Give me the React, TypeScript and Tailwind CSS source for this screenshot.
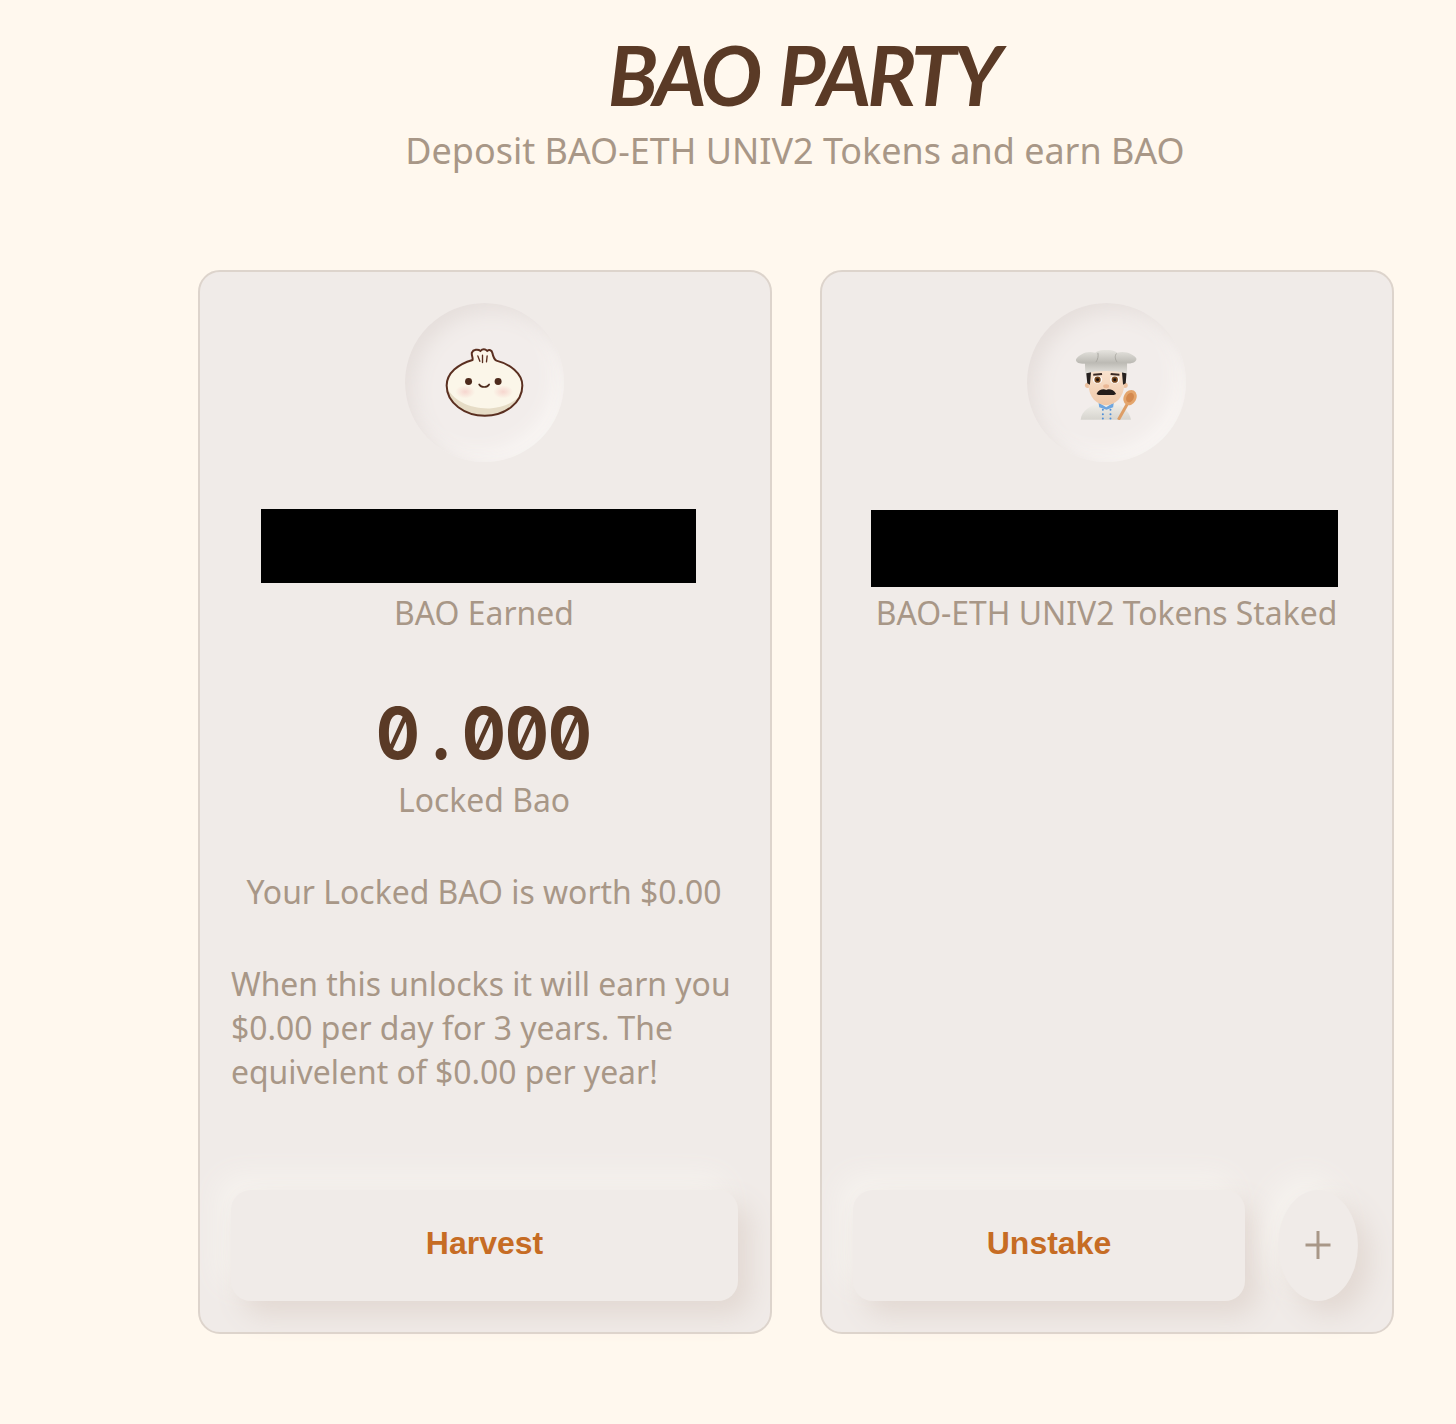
import React from "react";

const Bun = () => (
  <svg viewBox="165 172 238 212" className="w-[79px] h-[71px]">
    <defs>
      <radialGradient id="cheek">
        <stop offset="0%" stopColor="#f5c9c4" stopOpacity="0.7" />
        <stop offset="100%" stopColor="#f5c9c4" stopOpacity="0" />
      </radialGradient>
      <clipPath id="bunBody">
        <path d="M248 210C205 222 170 250 170 287C170 340 225 378 285 378C345 378 398 340 398 287C398 250 360 222 320 212C312 208 310 200 308 190C306 180 298 178 292 183C286 176 278 176 272 183C265 177 250 178 246 188C244 195 250 204 248 210Z" />
      </clipPath>
    </defs>
    <path d="M248 210C205 222 170 250 170 287C170 340 225 378 285 378C345 378 398 340 398 287C398 250 360 222 320 212C312 208 310 200 308 190C306 180 298 178 292 183C286 176 278 176 272 183C265 177 250 178 246 188C244 195 250 204 248 210Z" fill="#fbf6e9" />
    <g clipPath="url(#bunBody)">
      <path d="M170 290C185 330 240 358 300 356C340 354 375 340 398 310L398 385L170 385Z" fill="#e6dcc6" />
      <ellipse cx="226" cy="306" rx="30" ry="20" fill="url(#cheek)" />
      <ellipse cx="340" cy="306" rx="30" ry="20" fill="url(#cheek)" />
    </g>
    <path d="M248 210C205 222 170 250 170 287C170 340 225 378 285 378C345 378 398 340 398 287C398 250 360 222 320 212C312 208 310 200 308 190C306 180 298 178 292 183C286 176 278 176 272 183C265 177 250 178 246 188C244 195 250 204 248 210Z" fill="none" stroke="#5a2f20" strokeWidth="6" />
    <path d="M264 198L270 214M278 196L278 218M292 198L290 216" stroke="#5a2f20" strokeWidth="4" strokeLinecap="round" fill="none" />
    <circle cx="236" cy="275" r="10.5" fill="#4d2a1c" />
    <circle cx="325" cy="275" r="10.5" fill="#4d2a1c" />
    <path d="M268 284C274 294 292 294 298 284" stroke="#4d2a1c" strokeWidth="5" strokeLinecap="round" fill="none" />
  </svg>
);

const Chef = () => (
  <svg viewBox="184 180 184 210" className="w-[61px] h-[70px] mt-[5px]">
    <defs>
      <linearGradient id="hat" x1="0" y1="0" x2="0" y2="1">
        <stop offset="0%" stopColor="#e6e4df" />
        <stop offset="55%" stopColor="#bcbab4" />
        <stop offset="100%" stopColor="#e4e2dd" />
      </linearGradient>
      <linearGradient id="jacket" x1="0" y1="0" x2="0" y2="1">
        <stop offset="0%" stopColor="#f3f1ec" />
        <stop offset="100%" stopColor="#d6d4ce" />
      </linearGradient>
      <linearGradient id="face" x1="0" y1="0" x2="0" y2="1">
        <stop offset="0%" stopColor="#f9e3cf" />
        <stop offset="100%" stopColor="#efc8a8" />
      </linearGradient>
    </defs>
    <path d="M198 390C200 362 230 346 255 338L297 338C320 346 345 362 350 390Z" fill="url(#jacket)" />
    <path d="M252 338L275 352L298 338L296 352L276 360L254 352Z" fill="#6ea6e0" />
    <g fill="#4f8fd8">
      <circle cx="265" cy="360" r="3" />
      <circle cx="288" cy="360" r="3" />
      <circle cx="265" cy="373" r="3" />
      <circle cx="288" cy="373" r="3" />
      <circle cx="265" cy="386" r="3" />
      <circle cx="288" cy="386" r="3" />
    </g>
    <circle cx="219" cy="286" r="8" fill="#edc3a2" />
    <circle cx="332" cy="286" r="8" fill="#edc3a2" />
    <path d="M222 240L329 240L329 285C329 322 302 346 275 346C248 346 222 322 222 285Z" fill="url(#face)" />
    <path d="M214 240L230 240L226 284L218 280ZM337 240L322 240L326 284L334 280Z" fill="#26211f" />
    <path d="M236 251L262 249L263 255L236 257ZM289 249L315 251L315 257L288 255Z" fill="#3a2a24" />
    <ellipse cx="249" cy="269" rx="14" ry="11.500" fill="#fff" />
    <ellipse cx="301" cy="269" rx="14" ry="11.500" fill="#fff" />
    <circle cx="249" cy="269" r="9.500" fill="#7a4a20" />
    <circle cx="301" cy="269" r="9.500" fill="#7a4a20" />
    <circle cx="249" cy="269" r="4.500" fill="#1c120d" />
    <circle cx="301" cy="269" r="4.500" fill="#1c120d" />
    <ellipse cx="275" cy="289" rx="9" ry="6" fill="#eab896" />
    <path d="M246 312C252 298 268 296 275 300C282 296 298 298 305 312C295 318 285 314 275 315C265 314 255 318 246 312Z" fill="#241d1b" />
    <path d="M212 250L211 221C192 222 180 214 185 206C195 194 215 180 242 188C252 176 298 176 308 188C335 180 360 195 366 205C368 214 355 222 338 220L338 250C300 240 250 240 212 250Z" fill="url(#hat)" />
    <path d="M250 188C252 198 250 208 244 216M306 190C300 198 302 208 308 216" stroke="#a9a7a1" strokeWidth="3" fill="none" />
    <path d="M312 390L340 340" stroke="#dd9e66" strokeWidth="9" />
    <ellipse cx="347" cy="323" rx="19" ry="24" transform="rotate(28 347 323)" fill="#e4a56c" />
    <ellipse cx="347" cy="323" rx="11" ry="15" transform="rotate(28 347 323)" fill="#d4894e" />
  </svg>
);

const Plate = ({ children }: { children: React.ReactNode }) => (
  <div className="w-[159px] h-[159px] mr-[2px] rounded-full self-center flex items-center justify-center bg-[#f2edeb] shadow-[inset_8px_8px_20px_#e5dedb,inset_-8px_-8px_20px_#faf7f5]">
    {children}
  </div>
);

const ActionButton = ({ label, className }: { label: string; className: string }) => (
  <button className={`h-[111px] pb-[5px] rounded-[20px] bg-[#f0ebe8] text-[32px] font-bold text-[#c66c24] shadow-[12px_14px_28px_#e2d8d2,-12px_-14px_28px_#f6f3ef] ${className}`}>
    {label}
  </button>
);

export default function App() {
  return (
    <div className="min-h-[1424px] bg-[#fff8ee] pl-[136px] font-['Noto_Sans',sans-serif] text-[#a89787]">
      <div className="flex flex-col items-center">
        <h1 className="mt-[24px] ml-[14px] h-[100px] text-[82px] leading-[100px] italic font-bold tracking-[-4px] [word-spacing:6px] text-[#5a3a26] font-['Lato',sans-serif]">
          BAO PARTY
        </h1>
        <p className="mt-[2px] mr-[2px] text-[35.95px] leading-[50px]">Deposit BAO-ETH UNIV2 Tokens and earn BAO</p>
        <div className="mt-[94px] flex gap-[48px]">
          <section className="w-[574px] h-[1064px] rounded-[22px] border-2 border-[#ddd4cc] bg-[#f0ebe8] px-[31px] pt-[31px] pb-[31px] flex flex-col">
            <Plate>
              <Bun />
            </Plate>
            <div className="mt-[47px] ml-[30px] w-[435px] h-[74px] bg-black" />
            <p className="mt-[8px] mr-[2px] text-center text-[31.9px] leading-[44px]">BAO Earned</p>
            <div className="mt-[55px] mr-[2px] flex justify-center scale-y-110 text-[65px] leading-[88px] font-bold text-[#5a3a26] font-['Inter',monospace] slashed-zero">
              {["0", ".", "0", "0", "0"].map((c, i) => (
                <span key={i} className="w-[43px] flex justify-center">
                  {c}
                </span>
              ))}
            </div>
            <p className="mt-0 mr-[2px] text-center text-[31.9px] leading-[44px]">Locked Bao</p>
            <p className="mt-[48px] mr-[2px] text-center text-[31.9px] leading-[44px]">Your Locked BAO is worth $0.00</p>
            <p className="mt-[48px] text-[31.9px] leading-[44px]">
              When this unlocks it will earn you
              <br />
              $0.00 per day for 3 years. The
              <br />
              equivelent of $0.00 per year!
            </p>
            <div className="mt-auto flex pr-[1px]">
              <ActionButton label="Harvest" className="flex-1 font-['Liberation_Sans',sans-serif]" />
            </div>
          </section>
          <section className="w-[574px] h-[1064px] rounded-[22px] border-2 border-[#ddd4cc] bg-[#f0ebe8] px-[31px] pt-[31px] pb-[31px] flex flex-col">
            <Plate>
              <Chef />
            </Plate>
            <div className="mt-[48px] ml-[18px] w-[467px] h-[77px] bg-black" />
            <p className="mt-[4px] mr-[1px] text-center text-[31.9px] leading-[44px]">BAO-ETH UNIV2 Tokens Staked</p>
            <div className="mt-auto flex items-center gap-[33px] pr-[3px]">
              <ActionButton label="Unstake" className="flex-1 font-['Liberation_Sans',sans-serif]" />
              <button className="w-[80px] h-[111px] pb-[2px] rounded-[50%] bg-[#f0ebe8] flex items-center justify-center shadow-[12px_14px_28px_#e2d8d2,-12px_-14px_28px_#f6f3ef]">
                <svg viewBox="0 0 26 30" className="w-[26px] h-[30px]">
                  <path d="M0.500 15H25.500M13 1V29" stroke="#a89787" strokeWidth="3" fill="none" />
                </svg>
              </button>
            </div>
          </section>
        </div>
      </div>
    </div>
  );
}
